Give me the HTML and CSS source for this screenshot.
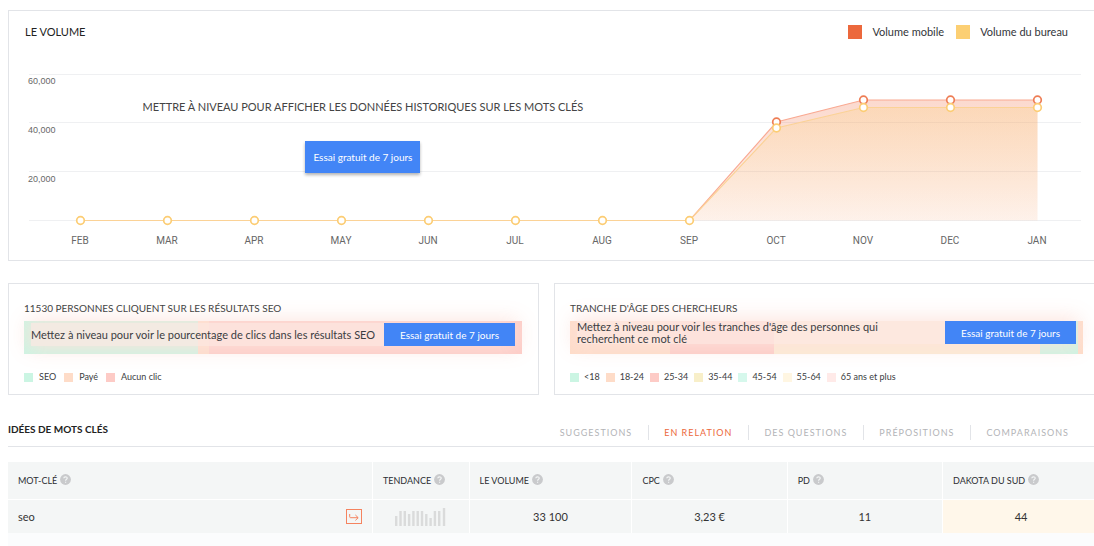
FILE: index.html
```html
<!DOCTYPE html>
<html lang="fr">
<head>
<meta charset="utf-8">
<title>Idées de mots clés</title>
<link rel="stylesheet" href="styles.css">
</head>
<body>
<svg class="defs" width="0" height="0" aria-hidden="true">
  <symbol id="help" viewBox="0 0 11 11">
    <circle cx="5.500" cy="5.500" r="5.400" fill="#c9cacc"/>
    <path d="M3.800 4.300C3.800 2.300 7.300 2.300 7.200 4.200C7.200 5.300 5.600 5.200 5.600 6.700M5.600 7.700V8.800" fill="none" stroke="#f4f6f6" stroke-width="1.200"/>
  </symbol>
</svg>
<main class="page">
  <section class="panel volume">
    <header class="volume-head">
      <h2 class="volume-title">LE VOLUME</h2>
      <ul class="legend legend-large">
        <li><i class="swatch mobile"></i>Volume mobile</li>
        <li><i class="swatch desktop"></i>Volume du bureau</li>
      </ul>
    </header>
    <div class="chart-wrap">
      <svg class="chart" viewBox="0 0 1056 190" role="img" aria-label="Volume par mois">
        <defs>
          <linearGradient id="fillMobile" x1="0" y1="0" x2="0" y2="1">
            <stop offset="0" stop-color="#f0693c" stop-opacity=".25"/>
            <stop offset="1" stop-color="#f0693c" stop-opacity=".08"/>
          </linearGradient>
          <linearGradient id="fillDesktop" x1="0" y1="0" x2="0" y2="1">
            <stop offset="0" stop-color="#fdcf72" stop-opacity=".25"/>
            <stop offset="1" stop-color="#fdcf72" stop-opacity=".04"/>
          </linearGradient>
        </defs>
        <path class="grid-line" d="M4 14.500H1056M4 62.500H1056M4 111.500H1056M4 160.500H1056"/>
        <path d="M664.500 160.500L751.500 62L838.500 40H1012.500V160.500Z" fill="url(#fillMobile)"/>
        <path d="M664.500 160.500L751.500 68L838.500 47.500H1012.500V160.500Z" fill="url(#fillDesktop)"/>
        <path class="line-mobile" d="M55.500 160.500H664.500L751.500 62L838.500 40H1012.500"/>
        <path class="line-desktop" d="M55.500 160.500H664.500L751.500 68L838.500 47.500H1012.500"/>
        <g class="dots-mobile">
          <circle cx="751.500" cy="62" r="3.800"/><circle cx="838.500" cy="40" r="3.800"/><circle cx="925.500" cy="40" r="3.800"/><circle cx="1012.500" cy="40" r="3.800"/>
        </g>
        <g class="dots-desktop">
          <circle cx="55.500" cy="160.500" r="3.800"/><circle cx="142.500" cy="160.500" r="3.800"/><circle cx="229.500" cy="160.500" r="3.800"/><circle cx="316.500" cy="160.500" r="3.800"/><circle cx="403.500" cy="160.500" r="3.800"/><circle cx="490.500" cy="160.500" r="3.800"/><circle cx="577.500" cy="160.500" r="3.800"/><circle cx="664.500" cy="160.500" r="3.800"/><circle cx="751.500" cy="68" r="3.800"/><circle cx="838.500" cy="47.500" r="3.800"/><circle cx="925.500" cy="47.500" r="3.800"/><circle cx="1012.500" cy="47.500" r="3.800"/>
        </g>
        <g class="axis-y">
          <text x="3" y="24">60,000</text><text x="3" y="73">40,000</text><text x="3" y="122">20,000</text>
        </g>
        <g class="axis-x">
          <text x="55" y="184">FEB</text><text x="142" y="184">MAR</text><text x="229" y="184">APR</text><text x="316" y="184">MAY</text><text x="403" y="184">JUN</text><text x="490" y="184">JUL</text><text x="577" y="184">AUG</text><text x="664" y="184">SEP</text><text x="751" y="184">OCT</text><text x="838" y="184">NOV</text><text x="925" y="184">DEC</text><text x="1012" y="184">JAN</text>
        </g>
      </svg>
      <div class="chart-prompt">
        <p>METTRE À NIVEAU POUR AFFICHER LES DONNÉES HISTORIQUES SUR LES MOTS CLÉS</p>
        <button class="cta cta-tall" type="button">Essai gratuit de 7 jours</button>
      </div>
    </div>
  </section>

  <div class="cards">
    <section class="panel card">
      <h3 class="card-title">11530 PERSONNES CLIQUENT SUR LES RÉSULTATS SEO</h3>
      <div class="bar bar-clicks">
        <i class="green"></i><i class="peach"></i><i class="red"></i>
        <div class="bar-prompt">
          <p>Mettez à niveau pour voir le pourcentage de clics dans les résultats SEO</p>
          <button class="cta" type="button">Essai gratuit de 7 jours</button>
        </div>
      </div>
      <ul class="legend">
        <li><i class="swatch green"></i>SEO</li>
        <li><i class="swatch peach"></i>Payé</li>
        <li><i class="swatch red"></i>Aucun clic</li>
      </ul>
    </section>
    <section class="panel card card-last">
      <h3 class="card-title">TRANCHE D'ÂGE DES CHERCHEURS</h3>
      <div class="bar bar-ages">
        <i class="peach"></i><i class="red"></i><i class="sand"></i><i class="green"></i><i class="peach"></i>
        <div class="bar-prompt bar-prompt-two">
          <p>Mettez à niveau pour voir les tranches d'âge des personnes qui recherchent ce mot clé</p>
          <button class="cta" type="button">Essai gratuit de 7 jours</button>
        </div>
      </div>
      <ul class="legend legend-tight">
        <li><i class="swatch green"></i>&lt;18</li>
        <li><i class="swatch peach"></i>18-24</li>
        <li><i class="swatch red"></i>25-34</li>
        <li><i class="swatch yellow"></i>35-44</li>
        <li><i class="swatch mint"></i>45-54</li>
        <li><i class="swatch cream"></i>55-64</li>
        <li><i class="swatch pink"></i>65 ans et plus</li>
      </ul>
    </section>
  </div>

  <section class="ideas">
    <header class="ideas-head">
      <h2 class="ideas-title">IDÉES DE MOTS CLÉS</h2>
      <nav class="tabs">
        <a href="#suggestions">SUGGESTIONS</a>
        <a href="#relation" class="active" aria-current="page">EN RELATION</a>
        <a href="#questions">DES QUESTIONS</a>
        <a href="#prepositions">PRÉPOSITIONS</a>
        <a href="#comparaisons">COMPARAISONS</a>
      </nav>
    </header>
    <table class="keywords">
      <colgroup><col class="c-key"><col class="c-trend"><col class="c-vol"><col class="c-cpc"><col class="c-pd"><col class="c-sd"></colgroup>
      <thead>
        <tr>
          <th scope="col">MOT-CLÉ<svg class="help"><use href="#help"/></svg></th>
          <th scope="col">TENDANCE<svg class="help"><use href="#help"/></svg></th>
          <th scope="col">LE VOLUME<svg class="help"><use href="#help"/></svg></th>
          <th scope="col">CPC<svg class="help"><use href="#help"/></svg></th>
          <th scope="col">PD<svg class="help"><use href="#help"/></svg></th>
          <th scope="col">DAKOTA DU SUD<svg class="help"><use href="#help"/></svg></th>
        </tr>
      </thead>
      <tbody>
        <tr>
          <td>
            <div class="keyword">seo
              <button class="open" type="button" aria-label="Ouvrir le mot-clé">
                <svg viewBox="0 0 10 8"><path d="M.700 1V3.800Q.700 4.700 1.600 4.700H9M6.400 2L9.200 4.700L6.400 7.400"/></svg>
              </button>
            </div>
          </td>
          <td class="num">
            <svg class="trend" viewBox="0 0 51 18" role="img" aria-label="Tendance"><path d="M1.200 8V18M5.500 3V18M9.800 3V18M14.100 6V18M18.400 3V18M22.700 3V18M27 3V18M31.300 6V18M35.600 10V18M39.900 3V18M44.200 3V18M49 0V18"/></svg>
          </td>
          <td class="num">33 100</td>
          <td class="num">3,23 €</td>
          <td class="num">11</td>
          <td class="num score">44</td>
        </tr>
      </tbody>
    </table>
    <div class="next-row"></div>
  </section>
</main>
</body>
</html>
```
FILE: styles.css
```css
* { box-sizing: border-box; }
body { margin: 0; background: #fff; color: #3b3d42; font-family: Lato, "Open Sans", sans-serif; font-size: 11px; line-height: 16px; }
h2, h3, p, ul { margin: 0; padding: 0; font-weight: 400; }
ul { list-style: none; }
button { font-family: inherit; cursor: pointer; }
.defs { position: absolute; }
.page { padding: 10px 0 0 8px; }
.panel { border: 1px solid #e2e4e8; background: #fff; }

.volume { border-right: 0; padding: 9px 13px 10px 16px; }
.volume-head { display: flex; justify-content: space-between; align-items: center; height: 24px; margin-bottom: 16px; padding-right: 13px; }
.volume-title { font-size: 11px; color: #222; }
.legend { display: flex; gap: 8px; font-size: 9px; line-height: 12px; }
.legend li { display: flex; align-items: center; gap: 6px; }
.legend-tight { gap: 6px; }
.legend-tight li { gap: 5px; }
.legend-large { gap: 12px; font-size: 11px; color: #33353a; }
.legend-large li { gap: 10px; }
.swatch { width: 9px; height: 9px; }
.legend-large .swatch { width: 14px; height: 14px; }
.mobile { background: #ec683c; }
.desktop { background: #fccf73; }
.green { background: #cbf5e3; }
.peach { background: #fedcc8; }
.red { background: #fdcbc6; }
.yellow { background: #f8efc9; }
.mint { background: #d6f8ec; }
.cream { background: #fff6e2; }
.pink { background: #ffeae8; }
.sand { background: #fcebd4; }

.chart-wrap { position: relative; }
.chart { display: block; width: 100%; height: auto; }
.grid-line { stroke: #eff0f2; }
.line-mobile, .line-desktop { fill: none; stroke-width: 1.200; }
.line-mobile { stroke: #f9a992; }
.line-desktop { stroke: #fbd296; }
.dots-mobile, .dots-desktop { fill: #fff; stroke-width: 1.700; }
.dots-mobile { stroke: #ee7d55; }
.dots-desktop { stroke: #fccd74; }
.axis-y { font: 9px "Liberation Sans", sans-serif; fill: #686868; }
.axis-x { font: 10px Roboto, sans-serif; fill: #666; text-anchor: middle; }
.chart-prompt { position: absolute; left: 0; top: 39px; width: 64%; display: flex; flex-direction: column; align-items: center; gap: 26px; }
.chart-prompt p { font-size: 11px; color: #444; white-space: nowrap; }
.cta { border: 0; height: 23px; padding: 0 16px; background: #4285f6; color: #fff; font-size: 10px; white-space: nowrap; flex: none; }
.cta-tall { height: 32px; padding: 0 8px; box-shadow: 0 2px 3px rgba(0, 0, 0, .3); }

.cards { display: grid; grid-template-columns: 59fr 60fr; gap: 15px; margin-top: 22px; }
.card { padding: 16px 16px 11px 15px; }
.card-last { border-right: 0; padding-right: 11px; }
.card-title { position: relative; z-index: 1; font-size: 10px; margin-bottom: 5px; color: #444; }
.bar { position: relative; display: grid; height: 33px; margin-bottom: 17px; }
.bar-clicks { grid-template-columns: 174fr 11fr 313fr; }
.bar-ages { grid-template-columns: 100fr 104fr 266fr 38fr 5fr; }
.bar-prompt { position: absolute; left: 7px; right: 7px; top: 2px; height: 23px; display: flex; align-items: center; justify-content: space-between; background: rgba(253, 231, 225, .8); box-shadow: 0 0 20px 3px rgba(253, 225, 218, .9); font-size: 11px; line-height: 12px; }
.bar-prompt-two { top: 0; }
.bar-prompt-two p { max-width: 310px; }

.ideas-head { display: flex; justify-content: space-between; align-items: center; height: 36px; margin-top: 16px; border-bottom: 1px solid #e2e4e8; }
.ideas-title { font-size: 10px; font-weight: 700; color: #222; }
.tabs { display: flex; padding: 7px 9px 0 0; }
.tabs a { padding: 0 16px 0 15px; border-left: 1px solid #e2e4e8; color: #b3b4b7; font-size: 9px; line-height: 15px; letter-spacing: 1px; text-decoration: none; }
.tabs a:first-child { border-left: 0; }
.tabs .active { color: #ec683c; }
.keywords { width: 100%; margin-top: 15px; table-layout: fixed; border-collapse: separate; border-spacing: 0; }
.c-key { width: 33.600%; }
.c-trend { width: 8.900%; }
.c-vol { width: 15%; }
.c-cpc { width: 14.300%; }
.c-pd { width: 14.300%; }
.c-sd { width: 13.900%; }
.keywords th, .keywords td { padding: 0 10px; background: #f4f6f6; border-right: 1px solid #fff; text-align: left; }
.keywords th:last-child, .keywords td:last-child { border-right: 0; }
.keywords th { height: 38px; border-bottom: 1px solid #fff; font-size: 9px; font-weight: 400; color: #2c2e33; white-space: nowrap; }
.keywords td { height: 33px; font-size: 11px; color: #333; }
.keywords .num { text-align: center; }
.keywords .score { background: #fff7ea; padding-left: 15px; }
.help { width: 11px; height: 11px; margin-left: 3px; vertical-align: -1px; }
.keyword { display: flex; justify-content: space-between; align-items: center; }
.open { width: 16px; height: 15px; padding: 0; border: 1px solid #f5835f; background: transparent; display: grid; place-items: center; }
.open svg { width: 10px; height: 8px; fill: none; stroke: #f5835f; }
.trend { display: block; width: 51px; height: 18px; margin: 0 auto; stroke: #dadbdb; stroke-width: 2.400; }
.next-row { height: 13px; background: #fbfcfd; }
```
